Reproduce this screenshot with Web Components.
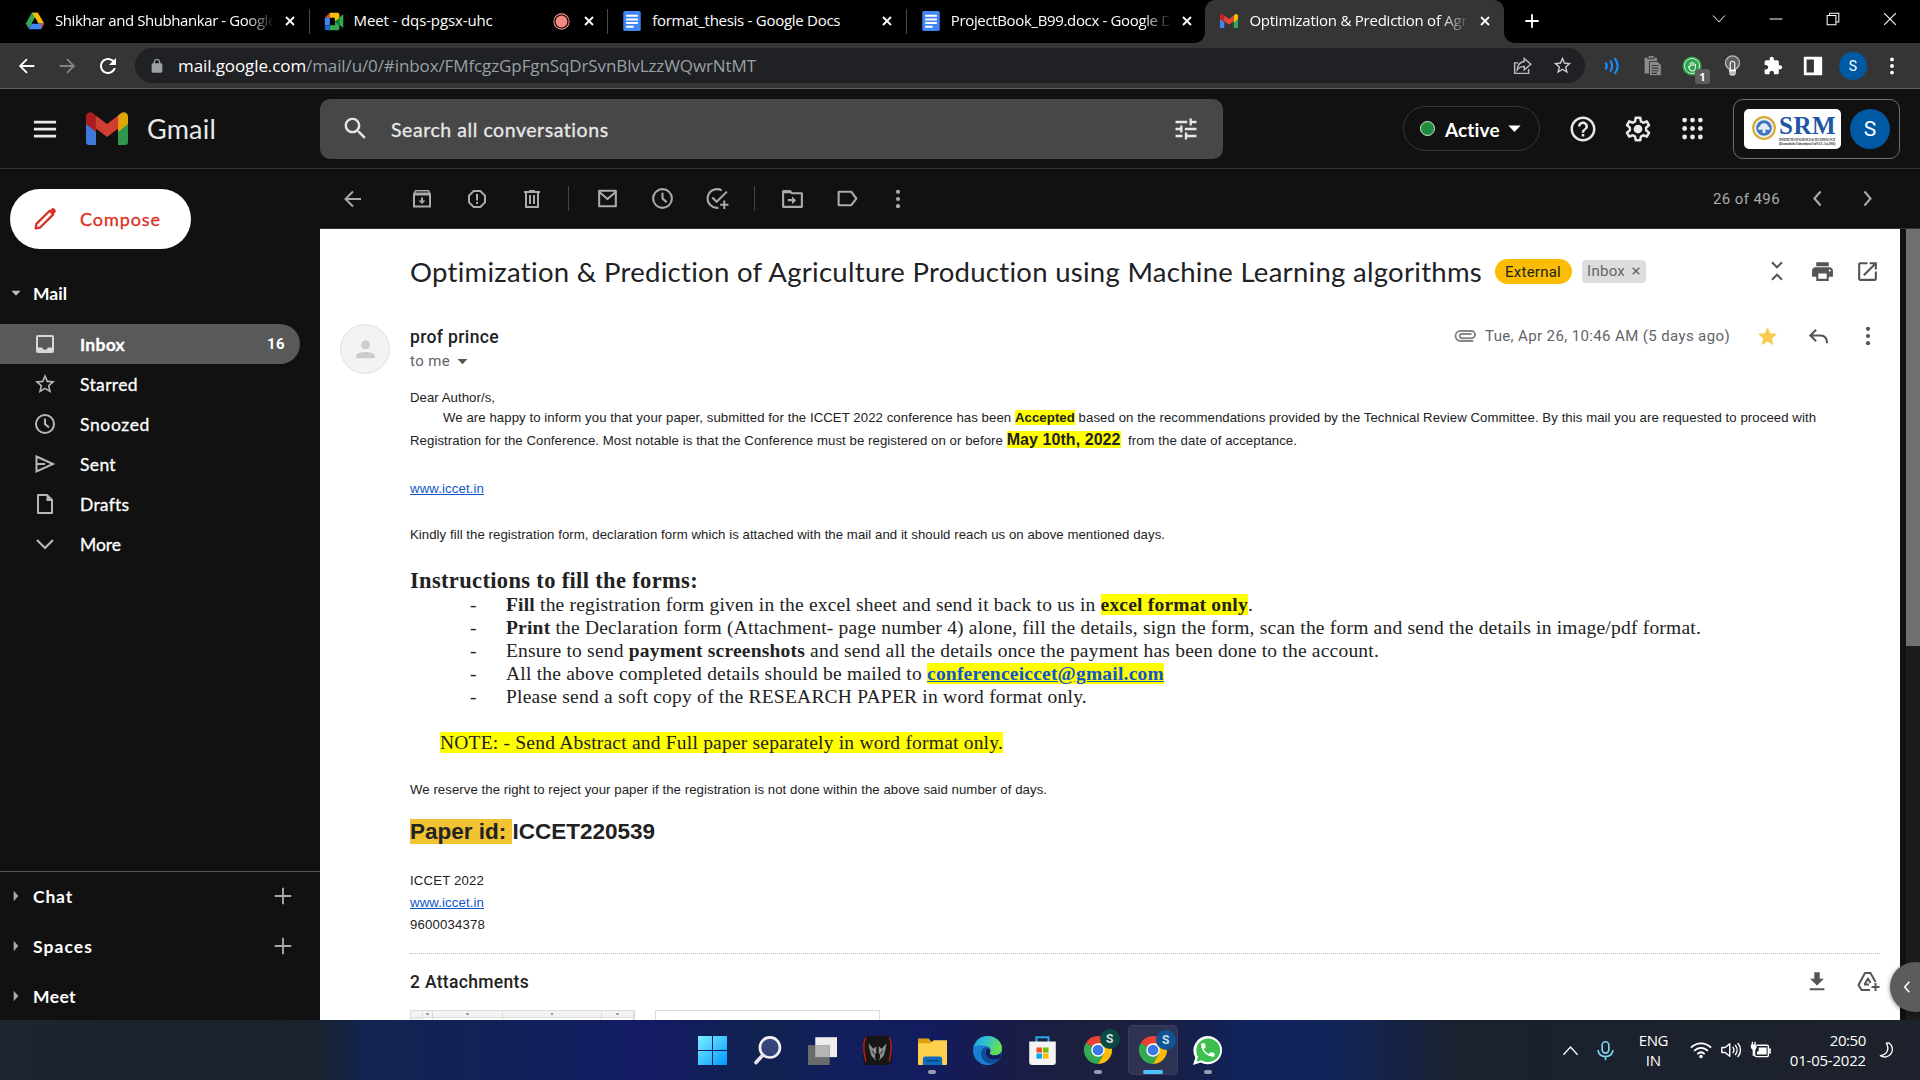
<!DOCTYPE html>
<html lang="en">
<head>
<meta charset="utf-8">
<title>Gmail</title>
<style>
html,body{margin:0;height:100%;overflow:hidden;background:#111}
desk-screen{width:1920px;height:1080px}
</style>
</head>
<body>
<desk-screen></desk-screen>
<script>
const ICONS={
back:'<path fill="none" stroke="currentColor" stroke-width="2" d="M20 12H5M12 4.500L4.500 12l7.500 7.500"/>',
forward:'<path fill="none" stroke="currentColor" stroke-width="2" d="M4 12h15M12 4.500l7.500 7.500-7.500 7.500"/>',
reload:'<path d="M17.650 6.350C16.200 4.900 14.210 4 12 4c-4.420 0-7.990 3.580-7.990 8s3.570 8 7.990 8c3.730 0 6.840-2.550 7.730-6h-2.080c-.82 2.330-3.040 4-5.650 4-3.310 0-6-2.690-6-6s2.690-6 6-6c1.660 0 3.140.69 4.220 1.780L13 11h7V4l-2.350 2.350z"/>',
lock:'<path d="M18 8h-1V6c0-2.760-2.240-5-5-5S7 3.240 7 6v2H6c-1.100 0-2 .9-2 2v10c0 1.100.9 2 2 2h12c1.100 0 2-.9 2-2V10c0-1.100-.9-2-2-2zM9 6c0-1.660 1.340-3 3-3s3 1.340 3 3v2H9V6z"/>',
close:'<path fill="none" stroke="currentColor" stroke-width="3.600" d="M4 4l16 16M20 4L4 20"/>',
plus:'<path fill="none" stroke="currentColor" stroke-width="2.800" d="M12 2v20M2 12h20"/>',
thinplus:'<path fill="none" stroke="currentColor" stroke-width="2" d="M12 3v18M3 12h18"/>',
wdown:'<path fill="none" stroke="currentColor" stroke-width="1.700" d="M2 6l10 11L22 6"/>',
wup:'<path fill="none" stroke="currentColor" stroke-width="1.800" d="M2 18l10-11 10 11"/>',
wmin:'<path fill="none" stroke="currentColor" stroke-width="1.700" d="M1 12h22"/>',
wmax:'<path fill="none" stroke="currentColor" stroke-width="1.800" d="M2 6h15v16H2zM6 6V2h16v15h-5"/>',
wclose:'<path fill="none" stroke="currentColor" stroke-width="1.900" d="M2 2l20 20M22 2L2 22"/>',
share:'<path fill="none" stroke="currentColor" stroke-width="1.700" d="M7 9H3v12h16v-5M14 4l7.500 6.500L14 17v-4c-4 0-6 1.200-8 4 .5-5.500 3-9 8-9.500z"/>',
star:'<path d="M22 9.240l-7.190-.62L12 2 9.190 8.630 2 9.240l5.460 4.730L5.820 21 12 17.270 18.180 21l-1.630-7.030L22 9.240zM12 15.400l-3.760 2.270 1-4.280-3.320-2.880 4.380-.38L12 6.100l1.710 4.040 4.380.38-3.320 2.880 1 4.280L12 15.400z"/>',
starfill:'<path d="M12 17.270L18.180 21l-1.640-7.030L22 9.240l-7.190-.61L12 2 9.190 8.630 2 9.240l5.460 4.730L5.820 21z"/>',
waves:'<g fill="none" stroke="#1a8cff" stroke-width="2.900"><path d="M3.500 7.500c2 3 2 6 0 9"/><path d="M9.500 4.500c3.500 5 3.500 10 0 15"/><path d="M15.500 1.500c5.500 7 5.500 14 0 21"/></g>',
clip:'<path fill="#8d8d8d" d="M3 3h4l1-2h5l1 2h3v5H8v13H3z"/><path fill="#4a4a4a" d="M6 3h8v2H6z"/><path fill="#8d8d8d" stroke="#353535" d="M8.500 7.500H18l4 4V23.500H8.500z"/><path stroke="#353535" stroke-width="1.300" d="M11 12h8M11 15h8M11 18h8M11 21h6"/>',
green:'<circle cx="12" cy="12" r="11.500" fill="#2ea24a"/><circle cx="12" cy="12" r="9" fill="none" stroke="#c6f0cc" stroke-width="1.200"/><path fill="none" stroke="#e8f7ea" stroke-width="1.300" stroke-linejoin="round" d="M7.500 12.500l2 4c1 2 5 2 6 0 .7-1.500.7-4 .7-7M9.800 13V8M12 12V6.500M14.200 12V7.500M7.500 12.500l2.300.5"/>',
bulb:'<circle cx="12" cy="9" r="8" fill="#5f5f5f" stroke="#bbb" stroke-width="1.500"/><path fill="none" stroke="#e8e8e8" stroke-width="1.500" d="M9.500 17V9.500c0-3 5-3 5 0V17"/><path fill="#fff" d="M8 17h8v4.500l-2 2h-4l-2-2z"/><path stroke="#777" d="M8 19.500h8M8 21.500h8"/>',
puzzle:'<path d="M20.500 11H19V7c0-1.100-.9-2-2-2h-4V3.500C13 2.120 11.880 1 10.500 1S8 2.120 8 3.500V5H4c-1.100 0-1.990.9-1.990 2v3.800H3.500c1.490 0 2.700 1.210 2.700 2.700s-1.210 2.700-2.700 2.700H2V20c0 1.100.9 2 2 2h3.800v-1.500c0-1.490 1.210-2.700 2.700-2.700 1.490 0 2.700 1.210 2.700 2.700V22H17c1.100 0 2-.9 2-2v-4h1.500c1.380 0 2.500-1.120 2.500-2.500S21.880 11 20.500 11z"/>',
panel:'<path fill-rule="evenodd" d="M2 2h20v20H2zM5 5v14h8V5z"/>',
more:'<circle cx="12" cy="4.800" r="2.100"/><circle cx="12" cy="12" r="2.100"/><circle cx="12" cy="19.200" r="2.100"/>',
menu:'<path d="M2.500 5h19v2.200h-19zM2.500 11h19v2.200h-19zM2.500 17h19v2.200h-19z"/>',
search:'<path d="M15.500 14h-.79l-.28-.27C15.410 12.590 16 11.110 16 9.500 16 5.910 13.090 3 9.500 3S3 5.910 3 9.500 5.910 16 9.500 16c1.610 0 3.090-.59 4.230-1.570l.27.28v.79l5 4.990L20.490 19l-4.990-5zm-6 0C7.010 14 5 11.990 5 9.500S7.010 5 9.500 5 14 7.010 14 9.500 11.990 14 9.500 14z"/>',
tune:'<path d="M3 17v2h6v-2H3zM3 5v2h10V5H3zm10 16v-2h8v-2h-8v-2h-2v6h2zM7 9v2H3v2h4v2h2V9H7zm14 4v-2H11v2h10zm-6-4h2V7h4V5h-4V3h-2v6z"/>',
help:'<path d="M11 18h2v-2h-2v2zm1-16C6.480 2 2 6.480 2 12s4.480 10 10 10 10-4.480 10-10S17.520 2 12 2zm0 18c-4.410 0-8-3.590-8-8s3.590-8 8-8 8 3.590 8 8-3.590 8-8 8zm0-14c-2.210 0-4 1.790-4 4h2c0-1.100.9-2 2-2s2 .9 2 2c0 2-3 1.750-3 5h2c0-2.250 3-2.500 3-5 0-2.210-1.790-4-4-4z"/>',
gear:'<path fill="none" stroke="currentColor" stroke-width="2" stroke-linejoin="round" d="M10.200 3h3.600l.5 2.900 1.900 1.100 2.800-1.100 1.800 3.100-2.300 1.900v2.200l2.300 1.900-1.800 3.100-2.800-1.100-1.900 1.100-.5 2.900h-3.600l-.5-2.900L7.800 17 5 18.100 3.200 15l2.300-1.900v-2.200L3.200 9 5 5.900 7.800 7l1.900-1.100z"/><circle cx="12" cy="12" r="3.500"/>',
apps:'<g><circle cx="5.500" cy="5" r="2"/><circle cx="12" cy="5" r="2"/><circle cx="18.500" cy="5" r="2"/><circle cx="5.500" cy="12" r="2"/><circle cx="12" cy="12" r="2"/><circle cx="18.500" cy="12" r="2"/><circle cx="5.500" cy="19" r="2"/><circle cx="12" cy="19" r="2"/><circle cx="18.500" cy="19" r="2"/></g>',
archive:'<path fill="none" stroke="currentColor" stroke-width="2" d="M4 7v12.500h16V7"/><path d="M3 7l2-4h14l2 4v1.500H3zM11 10.500h2v3h2.500L12 17l-3.500-3.500H11z"/><path stroke="#111" d="M5.500 5h13"/>',
spam:'<path fill-rule="evenodd" d="M15.730 3H8.270L3 8.270v7.460L8.270 21h7.460L21 15.730V8.270L15.730 3zM19 14.900L14.900 19H9.100L5 14.900V9.100L9.100 5h5.800L19 9.100v5.800zM11 7h2v6.500h-2zM11 15h2v2h-2z"/>',
trash:'<path fill="none" stroke="currentColor" stroke-width="2" d="M4 5h16M6 5v15h12V5M10 8v9M14 8v9"/><path d="M9 3h6v2H9z"/>',
mail:'<path fill="none" stroke="currentColor" stroke-width="2" stroke-linejoin="round" d="M4 4.500h16v15H4zM4.500 6L12 12.500 19.500 6"/>',
clock:'<circle cx="12" cy="12" r="9" fill="none" stroke="currentColor" stroke-width="2"/><path fill="none" stroke="currentColor" stroke-width="2" d="M12 6.500V12l4 3.500"/>',
task:'<path fill="none" stroke="currentColor" stroke-width="2" d="M16 4.200A9 9 0 1 0 13 20.900M7 11l4.200 4.200L21 5.400M18.500 14v8M14.500 18h8"/>',
move:'<path fill="none" stroke="currentColor" stroke-width="2" stroke-linejoin="round" d="M3 5h6.500l2 2H21v13H3z"/><path d="M3 4h7l2 3H3zM7.500 12.500h4V10l4 3.700-4 3.700v-2.700h-4z"/>',
label:'<path fill="none" stroke="currentColor" stroke-width="2" stroke-linejoin="round" d="M3.500 5.500h12L20.500 12l-5 6.500h-12z"/>',
left:'<path fill="none" stroke="currentColor" stroke-width="2.400" d="M15.500 4l-7 8 7 8"/>',
right:'<path fill="none" stroke="currentColor" stroke-width="2.400" d="M8.500 4l7 8-7 8"/>',
pencil:'<path fill="none" stroke="currentColor" stroke-width="2.200" stroke-linejoin="round" d="M2.500 21.500l.8-4.300L16 4.500l3.500 3.500L6.800 20.700z"/><path d="M15.800 4.700l2.400-2.400c1.300-1.300 4.800 2.200 3.500 3.500l-2.400 2.400z"/>',
inbox:'<path fill-rule="evenodd" d="M5 3h14a2 2 0 0 1 2 2v14a2 2 0 0 1-2 2H5a2 2 0 0 1-2-2V5a2 2 0 0 1 2-2zM5 5v10.500h4.200c.4 1.500 1.500 2.200 2.800 2.200s2.400-.7 2.800-2.200H19V5z"/>',
send:'<path fill="none" stroke="currentColor" stroke-width="2" d="M3.500 4.500L20 12 3.500 19.500zM3.500 12H12"/>',
draft:'<path fill="none" stroke="currentColor" stroke-width="2" stroke-linejoin="round" d="M5 3h9l5 5v13H5z"/><path d="M13.500 3.500V9H19z"/>',
chev:'<path fill="none" stroke="currentColor" stroke-width="2.200" d="M4 8l8 8 8-8"/>',
tri:'<path d="M5 8.500h14L12 16z"/>',
trir:'<path d="M8.500 4l7 8-7 8z"/>',
collapse:'<path fill="none" stroke="currentColor" stroke-width="2.200" d="M6.500 2.500L12 8l5.500-5.500M6.500 21.500L12 16l5.500 5.500"/>',
print:'<path d="M19 8H5c-1.660 0-3 1.340-3 3v6h4v4h12v-4h4v-6c0-1.660-1.340-3-3-3zm-3 11H8v-5h8v5zm3-7c-.55 0-1-.45-1-1s.45-1 1-1 1 .45 1 1-.45 1-1 1zm-1-9H6v4h12V3z"/>',
open:'<path d="M19 19H5V5h7V3H5c-1.110 0-2 .9-2 2v14c0 1.100.89 2 2 2h14c1.100 0 2-.9 2-2v-7h-2v7zM14 3v2h3.590l-9.830 9.830 1.410 1.410L19 6.410V10h2V3h-7z"/>',
attach:'<path fill="none" stroke="currentColor" stroke-width="1.900" stroke-linecap="round" d="M19.500 17H7.500a5 5 0 0 1 0-10H18.500a3.600 3.600 0 0 1 0 7.200H8.800a2.100 2.100 0 0 1 0-4.200h9"/>',
reply:'<path fill="none" stroke="currentColor" stroke-width="2.200" d="M9.500 5L3.500 11l6 6M4 11h10c4.500 0 7 2.500 7 8"/>',
download:'<path d="M9 2.500h6v7h4.500L12 17 4.500 9.500H9zM4 20h16v2H4z"/>',
driveadd:'<g fill="none" stroke="currentColor" stroke-width="2" stroke-linejoin="round"><path d="M14 21H5.500L2.500 16 9 4h5.500l5 9"/><path d="M8.500 15.500L12 9.500l2.500 4.500M8 15.500h5M19.500 14v8M15.500 18h8"/></g>',
person:'<circle cx="12" cy="7.500" r="4.300"/><path d="M3 20.500v-2.300c0-5 18-5 18 0v2.300z"/>',
gmail:'<svg viewBox="0 0 42 33" width="42" height="33"><path fill="#3e79da" d="M0 9l10 8v16H3a3 3 0 0 1-3-3z"/><path fill="#2f964b" d="M42 9l-10 8v16h7a3 3 0 0 0 3-3z"/><path fill="#a91f1f" d="M0 12V4.500C0 .8 4-1.200 7 1.200l3 2.300V20z"/><path fill="#e2a60a" d="M42 12V4.500c0-3.700-4-5.700-7-3.300l-3 2.300V20z"/><path fill="#d03d31" d="M9.800 3.500L21 12 32.200 3.500V16.500L21 25 9.800 16.500z"/></svg>',
gm:'<svg viewBox="0 0 42 33" width="22" height="17" x="1" y="3.500"><path fill="#4285f4" d="M0 9l10 8v16H3a3 3 0 0 1-3-3z"/><path fill="#34a853" d="M42 9l-10 8v16h7a3 3 0 0 0 3-3z"/><path fill="#c5221f" d="M0 12V4.500C0 .8 4-1.200 7 1.200l3 2.300V20z"/><path fill="#fbbc04" d="M42 12V4.500c0-3.700-4-5.700-7-3.300l-3 2.300V20z"/><path fill="#ea4335" d="M9.800 3.500L21 12 32.200 3.500V16.500L21 25 9.800 16.500z"/></svg>',
drive:'<path fill="#34a853" d="M8.200 2h7L8.500 14.500 4.500 21 1 15z"/><path fill="#fbbc04" d="M8.500 2h7L23 15h-7z"/><path fill="#4285f4" d="M8 15h15l-3.800 7H4.500z"/><path fill="#000" d="M12 8l4 7H8z"/><path fill="#ea4335" d="M19 15h4l-3.500 6z"/>',
meet:'<path fill="#ea4335" d="M7 2v6H1z"/><path fill="#4285f4" d="M1 8h6v9H1z"/><path fill="#1967d2" d="M1 17h6v6H3a2 2 0 0 1-2-2z"/><path fill="#fbbc04" d="M7 2h9.500a2 2 0 0 1 2 2v7.500L13 12V8H7z"/><path fill="#34a853" d="M7 17h6v-5l5.500 5v4a2 2 0 0 1-2 2H7z"/><path fill="#00832d" d="M13.500 12.500L23 4v16z"/><path fill="#34a853" d="M18.500 8L23 4v16l-4.500-3.500z"/>',
docs:'<rect x="1.500" y="0" width="21" height="24" rx="2" fill="#4285f4"/><path fill="#fff" d="M5 4.500h14v2.400H5zM5 8.900h14v2.400H5zM5 13.300h14v2.400H5zM5 17.600h9V20H5z"/>',
rec:'<circle cx="12" cy="12" r="10.800" fill="none" stroke="#f28b82" stroke-width="1.500"/><circle cx="12" cy="12" r="8.300" fill="#f28b82"/>',
emblem:'<circle cx="12" cy="12" r="10.800" fill="#eef3fb" stroke="#d6ae37" stroke-width="2.200"/><circle cx="12" cy="12" r="7.800" fill="#3f74bf"/><path fill="#e3edf9" d="M6 13.500c0-3 2-2.500 2.500-4.500C10 6.500 14 6.500 15.500 9c.5 2 2.500 1.500 2.500 4.500-2 1-3.500-.5-4.500 0v3.500h-3v-3.500c-1-.5-2.500 1-4.500 0z"/>',
win:'<defs><linearGradient id="w" gradientUnits="userSpaceOnUse" x1="0" y1="0" x2="24" y2="24"><stop stop-color="#7df0ff"/><stop offset="1" stop-color="#0098ff"/></linearGradient></defs><path fill="url(#w)" d="M0 0h11.600v11.600H0zM12.400 0H24v11.600H12.400zM0 12.400h11.600V24H0zM12.400 12.400H24V24H12.400z"/>',
tsearch:'<circle cx="14" cy="9.500" r="8.300" fill="#35457a" stroke="#f2f2f4" stroke-width="2.200"/><path stroke="#e4e4ea" stroke-width="3" stroke-linecap="round" d="M8 16L2.500 22"/>',
tview:'<rect x="6" y="1" width="18" height="16.500" fill="#ededed"/><rect x="0" y="7.500" width="18" height="16.500" fill="#6b6b6b"/><path fill="#b5b5b5" d="M6 7.500h12v10H6z"/>',
pred:'<path fill="#161616" d="M3 0h18l3 4v15l-2 5H2l-2-5V4z"/><path stroke="#d81e1e" stroke-width="1" fill="none" d="M2.500 1L.8 5v8l1.500 8M21.500 1l1.700 4v8l-1.500 8"/><path fill="#8d8d8d" d="M4.500 6l4 4.500L11 8.500v5.500l-1 1v3l1 2.500-4-4-1.500-5zM19.500 6l-4 4.500L13 8.500v5.500l1 1v3l-1 2.500 4-4 1.500-5z"/><path stroke="#222" stroke-width=".8" d="M7.500 12l2 3M16.500 12l-2 3"/>',
folder:'<path fill="#e0a012" d="M0 2h9l3 4v10H0z"/><path fill="#ffd04d" d="M0 6h10l3-2.500h11V23a1 1 0 0 1-1 1H1a1 1 0 0 1-1-1z"/><path fill="#0f6cbd" d="M4 24v-5a2 2 0 0 1 2-2h12a2 2 0 0 1 2 2v5z"/><path stroke="#0a3d70" stroke-width="1" d="M7 20.500h10"/>',
edge:'<defs><linearGradient id="e" x1="0" y1="0" x2="1" y2=".4"><stop stop-color="#1ca3e8"/><stop offset=".5" stop-color="#35c1c9"/><stop offset="1" stop-color="#66e04e"/></linearGradient></defs><circle cx="12" cy="12" r="12" fill="#1b7fd6"/><path fill="url(#e)" d="M.2 10C2 3 7 0 12 0c7 0 12 5 12 10 0 3.500-2.500 6-6 6-3 0-4.500-1.300-4-2.200 1.500-1.800.8-5.800-4-5.800C6 7.500 1.500 7 .2 10z"/><path fill="#0c4f97" d="M9.500 9.500c-4 1.500-4.500 12 5 13.500 3 .2 6.500-2 8-4.500-3 1.500-11 1.500-12-4.500-.2-1.500 0-3 1.500-4.500-.5-.3-1.500-.4-2.500 0z"/><path fill="#141d5c" d="M14 13.800c-.5.900 1 2.200 4 2.200 2.500 0 4.500-1 5.600-2.800-.2 2-.6 3.600-1.400 5.300-3 1.500-11 1.500-11.700-4.500 0-1.500.5-3 1.500-4 2 .5 2.900 2.700 2 3.800z"/>',
store:'<path fill="none" stroke="#29a8e8" stroke-width="1.700" d="M7 5V1h10v4"/><path fill="#f4f4f4" d="M1 4.500h22V22a2 2 0 0 1-2 2H3a2 2 0 0 1-2-2z"/><path fill="#f25022" d="M7 9.500h4.600v4.200H7z"/><path fill="#7fba00" d="M12.400 9.500H17v4.200h-4.600z"/><path fill="#00a4ef" d="M7 14.500h4.600v4.200H7z"/><path fill="#ffb900" d="M12.400 14.500H17v4.200h-4.600z"/>',
chrome:'<path fill="#ea4335" d="M12 12L1.600 6A12 12 0 0 1 22.400 6H12z"/><path fill="#34a853" d="M12 12L1.600 6A12 12 0 0 0 12 24l5.200-9z"/><path fill="#fbbc04" d="M12 6h10.400A12 12 0 0 1 12 24l5.200-9z"/><circle cx="12" cy="12" r="5.800" fill="#fff"/><circle cx="12" cy="12" r="4.600" fill="#3b78e7"/>',
wa:'<path fill="#fff" d="M12 0a12 11.700 0 1 1-5.600 22L0 24l1.900-6A12 12 0 0 1 12 0z"/><path fill="#3dbf50" d="M12 2a10 9.800 0 1 1-5 18l-4 1.100 1.200-3.800A10 10 0 0 1 12 2z"/><g transform="translate(4.800 4.200) scale(.62)"><path fill="#fff" d="M6.620 10.790c1.440 2.830 3.760 5.140 6.590 6.590l2.200-2.200c.27-.27.67-.36 1.020-.24 1.120.37 2.330.57 3.570.57.55 0 1 .45 1 1V20c0 .55-.45 1-1 1-9.390 0-17-7.610-17-17 0-.55.45-1 1-1h3.500c.55 0 1 .45 1 1 0 1.250.2 2.450.57 3.570.11.35.03.74-.25 1.020l-2.200 2.200z"/></g>',
mic:'<g fill="none" stroke="#79d3ea" stroke-width="1.900"><rect x="8.200" y="2" width="7.600" height="13" rx="3.800"/><path d="M3.500 11.500c0 10 17 10 17 0M12 19v4"/></g>',
wifi:'<g fill="none" stroke="#fff" stroke-width="1.900"><path d="M1 9.500c6.500-6.300 15.500-6.300 22 0M4.500 13c4.500-4.500 10.500-4.500 15 0M8 16.500c2.500-2.500 5.500-2.500 8 0"/></g><circle cx="12" cy="19" r="1.900" fill="#fff"/>',
vol:'<g fill="none" stroke="#fff" stroke-width="1.700" stroke-linejoin="round"><path d="M1 9v6h4l5.500 4.500v-15L5 9zM14 8.500c1.800 2 1.800 5 0 7M17 6c3 3.500 3 8.500 0 12M20 3.500c4.500 5 4.500 12 0 17"/></g>',
batt:'<g fill="none" stroke="#fff" stroke-width="1.700"><path d="M8 6h11.500a1.500 1.500 0 0 1 1.500 1.500v10a1.500 1.500 0 0 1-1.500 1.500h-12a2 2 0 0 1-2-2M21.500 10.500h1.500v4h-1.500"/></g><path fill="#fff" d="M10 8.500h9v8H8v-3l2-1zM1 5h1V2h1.500v3H5V2h1.500v3h1v4L6 11v7H3v-7L1 9z"/>',
moon:'<path fill="none" stroke="#fff" stroke-width="1.700" stroke-linejoin="round" d="M14 2.500A9.700 9.700 0 1 1 3 18.500C11 17.500 15 11 10.500 2.700 11.500 2.400 13 2.300 14 2.500z"/>'
};
const fits=[];
const define=(tag,html,setup)=>{
  const t=document.createElement('template');t.innerHTML=html;
  customElements.define(tag,class extends HTMLElement{
    connectedCallback(){
      if(this.shadowRoot)return;
      const r=this.attachShadow({mode:'open'});
      r.append(t.content.cloneNode(true));
      if(setup)setup(this,r);
    }
  });
};
/* An icon from the table above: name, size (px) */
define('ui-icon','<style>:host{display:block;flex:none;line-height:0}svg{display:block;overflow:visible}</style>',(el,r)=>{
  const n=el.getAttribute('name'),s=el.getAttribute('size')||24,w=el.getAttribute('wide')||s;
  const d=document.createElement('div');
  d.innerHTML=n==='gmail'?ICONS[n]:`<svg width="${w}" height="${s}" viewBox="0 0 24 24" fill="currentColor" preserveAspectRatio="none">${ICONS[n]}</svg>`;
  r.append(d);
});
/* One line of text tracked out or in to a measured width */
define('fit-text','<style>:host{display:inline-block;flex:none;white-space:nowrap}</style><slot></slot>',el=>fits.push(el));
define('browser-tab',`<style>
:host{display:flex;align-items:center;flex:none;box-sizing:border-box;width:298.6px;height:43px;padding:0 0 1px 14px;color:#fff;position:relative;font:15px "Open Sans",sans-serif}
:host([active]){background:#353535;border-radius:10px 10px 0 0}
:host([active])::before,:host([active])::after{content:"";position:absolute;bottom:0;width:10px;height:10px}
:host([active])::before{left:-10px;background:radial-gradient(circle at 0 0,transparent 9.500px,#353535 10px)}
:host([active])::after{right:-10px;background:radial-gradient(circle at 100% 0,transparent 9.500px,#353535 10px)}
.t{width:218px;margin-left:10px;overflow:hidden;white-space:nowrap;height:26px;line-height:24px}
:host([fade]) .t{-webkit-mask-image:linear-gradient(90deg,#000 88%,rgba(0,0,0,.1))}
:host([rec]) .t{width:199px}
.rec{display:none;margin-left:0}:host([rec]) .rec{display:block}
.c{margin-left:12px}:host([rec]) .c{margin-left:13px}
.s{margin-left:13px;width:1px;height:25px;background:#4a4a4a}
:host([rec]) .s{margin-left:12px}
:host([nosep]) .s{display:none}
</style><ui-icon class="i" size="20"></ui-icon><div class="t"><slot></slot></div><ui-icon class="rec" name="rec" size="17"></ui-icon><ui-icon class="c" name="close" size="12"></ui-icon><span class="s"></span>`,(el,r)=>{
  const i=document.createElement('ui-icon');i.setAttribute('name',el.getAttribute('icon'));i.setAttribute('size','20');
  r.querySelector('.i').replaceWith(i);
});
define('browser-chrome',`<style>
:host{display:block;flex:none;height:89px;background:#000;color:#fff;font-family:"Open Sans",sans-serif}
.tabs{display:flex;height:43px;padding-left:11px;align-items:center}
.bar{display:flex;align-items:center;height:45px;background:#353535;border-bottom:1px solid #5e5e5e}
.omni{display:flex;align-items:center;width:1450px;height:35px;border-radius:18px;background:#202124;margin-left:15px;font-size:17px;color:#9aa0a6}
.omni b{font-weight:400;color:#fff}
.omni fit-text{margin-left:13px}
.g{position:relative;margin-left:19px}
.badge{position:absolute;left:13px;top:13px;width:15px;height:15px;border-radius:3px;background:#5d5d5d;font:bold 11px/15px "Open Sans",sans-serif;text-align:center}
.av{width:28px;height:28px;border-radius:50%;background:#0059a3;font:14px/28px Roboto,sans-serif;text-align:center;margin-left:15px}
</style>
<div class="tabs">
<browser-tab icon="drive" fade><fit-text w="221">Shikhar and Shubhankar - Google</fit-text></browser-tab>
<browser-tab icon="meet" rec><fit-text w="139">Meet - dqs-pgsx-uhc</fit-text></browser-tab>
<browser-tab icon="docs"><fit-text w="188">format_thesis - Google Docs</fit-text></browser-tab>
<browser-tab icon="docs" fade nosep><fit-text w="221">ProjectBook_B99.docx - Google D</fit-text></browser-tab>
<browser-tab icon="gm" fade nosep active><fit-text w="218">Optimization &amp; Prediction of Agr</fit-text></browser-tab>
<ui-icon name="plus" size="16" style="margin:-1px 0 0 20px"></ui-icon>
<ui-icon name="wdown" size="14" style="margin:-6px 0 0 172px"></ui-icon>
<ui-icon name="wmin" size="14" style="margin:-6px 0 0 43px"></ui-icon>
<ui-icon name="wmax" size="14" style="margin:-6px 0 0 43px"></ui-icon>
<ui-icon name="wclose" size="14" style="margin:-6px 0 0 43px"></ui-icon>
</div>
<div class="bar">
<ui-icon name="back" size="22" style="margin-left:16px"></ui-icon>
<ui-icon name="forward" size="22" style="margin-left:18px;color:#848484"></ui-icon>
<ui-icon name="reload" size="24" style="margin-left:18px"></ui-icon>
<div class="omni"><ui-icon name="lock" size="16" style="margin-left:14px;color:#9aa0a6"></ui-icon><fit-text w="578"><b>mail.google.com</b>/mail/u/0/#inbox/FMfcgzGpFgnSqDrSvnBlvLzzWQwrNtMT</fit-text>
<ui-icon name="share" size="21" style="margin-left:756px;color:#bbb"></ui-icon><ui-icon name="star" size="21" style="margin-left:19px;color:#ccc"></ui-icon></div>
<ui-icon name="waves" size="18" style="margin-left:18px"></ui-icon>
<ui-icon name="clip" size="21" style="margin-left:21px"></ui-icon>
<div class="g"><ui-icon name="green" size="20"></ui-icon><span class="badge">1</span></div>
<ui-icon name="bulb" size="21" style="margin-left:20px"></ui-icon>
<ui-icon name="puzzle" size="20" style="margin-left:20px"></ui-icon>
<ui-icon name="panel" size="22" style="margin-left:19px"></ui-icon>
<div class="av">S</div>
<ui-icon name="more" size="22" style="margin-left:14px"></ui-icon>
</div>`);
define('gmail-header',`<style>
:host{display:flex;flex:none;align-items:center;height:79px;border-bottom:1px solid #333;color:#e8e8e8;background:#111}
.brand{font:27px Lato,sans-serif;margin-left:19px}
.search{display:flex;align-items:center;width:903px;height:60px;margin-left:105px;border-radius:10px;background:#474747;font:19.500px Lato,sans-serif;-webkit-text-stroke:.3px #e8e8e8}
.pill{display:flex;align-items:center;box-sizing:border-box;width:137px;height:45px;border:1px solid #363636;border-radius:23px;margin-left:180px;font:bold 19px Lato,sans-serif;color:#fff}
.dot{box-sizing:border-box;width:15px;height:15px;border-radius:50%;background:#1e8e3e;border:1px solid #d5e9d9;margin:0 10px 0 16px}
.acct{display:flex;align-items:center;box-sizing:border-box;width:167px;height:60px;border:1px solid #6a6d71;border-radius:10px;margin-left:26px}
.logo{display:flex;width:97px;height:40px;background:#fff;border-radius:5px;margin-left:10px;align-items:flex-start}
.txt{display:flex;flex-direction:column;align-items:flex-start;color:#1f55a5;margin:4px 0 0 3px;font:bold 25px/25px "Liberation Serif",serif}
.txt .a{font:bold 3.500px/4px "Liberation Serif",serif;color:#444;margin-top:0}
.av{width:40px;height:40px;border-radius:50%;background:#0059a3;margin-left:9px;text-align:center;font:21px/41px Roboto,sans-serif;color:#fff}
</style>
<ui-icon name="menu" size="28" style="margin-left:31px"></ui-icon>
<ui-icon name="gmail" style="margin-left:27px"></ui-icon>
<fit-text class="brand" w="69">Gmail</fit-text>
<div class="search" style="margin-left:104px"><ui-icon name="search" size="29" style="margin-left:21px"></ui-icon><fit-text w="218" style="margin-left:21px;padding-top:2px">Search all conversations</fit-text><ui-icon name="tune" size="28" style="margin-left:563px"></ui-icon></div>
<div class="pill"><span class="dot"></span><fit-text w="55" style="padding-top:1px">Active</fit-text><ui-icon name="tri" size="21" style="margin-left:4px"></ui-icon></div>
<ui-icon name="help" size="30" style="margin-left:28px"></ui-icon>
<ui-icon name="gear" size="30" style="margin-left:25px"></ui-icon>
<ui-icon name="apps" size="29" style="margin-left:25px"></ui-icon>
<div class="acct"><div class="logo"><ui-icon name="emblem" size="24" style="margin:7px 0 0 8px"></ui-icon><div class="txt"><fit-text w="57">SRM</fit-text><fit-text class="a" w="56">INSTITUTE OF SCIENCE &amp; TECHNOLOGY</fit-text><fit-text class="a" w="56">(Deemed to be University u/s 3 of UGC Act, 1956)</fit-text></div></div><div class="av">S</div></div>`);
define('nav-row',`<style>
:host{display:flex;align-items:center;height:40px;width:300px;box-sizing:border-box;padding-left:33px;color:#fff;font:17.500px Lato,sans-serif;-webkit-text-stroke:.3px #fff}
:host([selected]){background:#595959;border-radius:0 20px 20px 0;font-weight:bold}
span{width:47px;color:#b8b8b8}:host([selected]) span{color:#d8d8d8}
em{margin-left:auto;padding-right:15px;font:bold 15px Roboto,sans-serif;-webkit-text-stroke:0}
</style><span></span><slot></slot><em><slot name="count"></slot></em>`,(el,r)=>{
  const i=document.createElement('ui-icon');i.setAttribute('name',el.getAttribute('icon'));i.setAttribute('size','24');
  r.querySelector('span').append(i);
});
define('nav-section',`<style>
:host{display:flex;align-items:center;box-sizing:border-box;height:50px;padding:0 0 2px 8px;color:#fff;font:bold 17.500px Lato,sans-serif}
ui-icon{color:#aaa}.t{width:17px;margin-right:8px}
.p{margin-left:auto;margin-right:26px}:host(:not([add])) .p{display:none}
</style><div class="t"><slot name="mark"><ui-icon name="trir" size="16"></ui-icon></slot></div><slot></slot><ui-icon class="p" name="thinplus" size="22"></ui-icon>`);
define('side-bar',`<style>
:host{display:flex;flex-direction:column;width:320px;height:851px;background:#111}
.compose{display:flex;align-items:center;box-sizing:border-box;width:181px;height:60px;margin:20px 0 20px 10px;border-radius:30px;background:#fff;color:#d93025;padding:0 0 1px 23px;font:18px Lato,sans-serif;-webkit-text-stroke:.3px #d93025;flex:none}
.mail{margin-bottom:5px}
.low{margin-top:auto;border-top:1px solid #555;height:148px}
</style>
<div class="compose"><ui-icon name="pencil" size="25"></ui-icon><fit-text w="81" style="margin-left:22px">Compose</fit-text></div>
<nav-section class="mail"><ui-icon slot="mark" name="tri" size="16" style="color:#bbb"></ui-icon><fit-text w="34">Mail</fit-text></nav-section>
<nav-row icon="inbox" selected><fit-text w="45">Inbox</fit-text><fit-text slot="count" w="18">16</fit-text></nav-row>
<nav-row icon="star"><fit-text w="58">Starred</fit-text></nav-row>
<nav-row icon="clock"><fit-text w="70">Snoozed</fit-text></nav-row>
<nav-row icon="send"><fit-text w="36">Sent</fit-text></nav-row>
<nav-row icon="draft"><fit-text w="49">Drafts</fit-text></nav-row>
<nav-row icon="chev"><fit-text w="41">More</fit-text></nav-row>
<div class="low"><nav-section add><fit-text w="40">Chat</fit-text></nav-section><nav-section add><fit-text w="60">Spaces</fit-text></nav-section><nav-section><fit-text w="43">Meet</fit-text></nav-section></div>`);
define('mail-toolbar',`<style>
:host{display:flex;align-items:center;height:59px;flex:none;border-bottom:1px solid #333;color:#aaa;font:15px Roboto,sans-serif;padding-left:21px}
i{width:1px;height:25px;background:#444;margin:0 25px 0 24px}
.n{margin-left:803px}
</style><ui-icon name="back" size="24"></ui-icon>
<ui-icon name="archive" size="24" style="margin-left:45px"></ui-icon><ui-icon name="spam" size="24" style="margin-left:31px"></ui-icon><ui-icon name="trash" size="24" style="margin-left:31px"></ui-icon><i></i>
<ui-icon name="mail" size="25" style="margin-left:1px"></ui-icon><ui-icon name="clock" size="25" style="margin-left:30px"></ui-icon><ui-icon name="task" size="25" style="margin-left:30px"></ui-icon><i></i>
<ui-icon name="move" size="25"></ui-icon><ui-icon name="label" size="25" style="margin-left:30px"></ui-icon><ui-icon name="more" size="24" style="margin-left:26px"></ui-icon>
<fit-text class="n" w="67">26 of 496</fit-text><ui-icon name="left" size="21" style="margin-left:27px"></ui-icon><ui-icon name="right" size="21" style="margin-left:29px"></ui-icon>`);
define('mail-line','<style>:host{display:block;height:20px;line-height:20px;margin-top:var(--gap,0px);white-space:nowrap}</style><slot></slot>');
define('mail-message',`<style>
:host{display:block;width:1580px;height:791px;overflow:hidden;background:#fff;color:#202124;box-sizing:border-box;padding-left:20px}
.head{display:flex;align-items:center;height:84px;padding-left:70px;color:#555}
h1{margin:0;font:27.500px Lato,sans-serif;color:#202124}
.ext{box-sizing:border-box;width:77px;height:25px;border-radius:13px;background:#fbbc04;color:#222;font:15px/26px Roboto,sans-serif;padding-left:10px;margin-left:13px}
.tag{display:flex;align-items:center;box-sizing:border-box;width:64px;height:23px;border-radius:4px;background:#ddd;color:#666;font:15px Roboto,sans-serif;padding-left:5px;margin-left:10px}
.from{display:flex;height:72px;font-family:Roboto,sans-serif;margin-top:2px}
.av{display:flex;align-items:center;justify-content:center;box-sizing:border-box;width:50px;height:50px;margin-top:9px;border:1px solid #e2e2e2;border-radius:50%;background:#f3f3f3;color:#ccc}
.who{margin:10px 0 0 20px;width:300px}
.who b{display:block;font-size:17.500px;line-height:24px;font-weight:500}
.who div{display:flex;align-items:center;color:#5f6368;font-size:15px;line-height:24px}
.meta{display:flex;align-items:center;height:42px;margin-left:743px;color:#5f6368;font-size:15px}
.body{padding:1px 0 0 70px;color:#222;font:13.200px "Liberation Sans",sans-serif}
.t{font:19.500px/20px "Liberation Serif",serif}
mark{background:#ff0;color:inherit}
a{color:#15c;text-decoration:underline}
.li{display:flex;padding-left:60px}.li::before{content:"-";width:36px}
.rule{width:1470px;height:0;border-top:1px dotted #bbb}
.att{display:flex;align-items:center;height:56px;font:500 17.500px Roboto,sans-serif;color:#222}
.att ui-icon{color:#555;margin-top:-2px}
.thumbs{display:flex;gap:20px}
.card{box-sizing:border-box;width:225px;height:40px;border:1px solid #ddd;background:#fff}
.sheet{display:grid;grid-template-columns:12px 10px 70px 99px 1fr;grid-template-rows:7px 20px;background:#f3f3f3}
.sheet span{border-right:1px solid #ddd;border-bottom:1px solid #ddd;background:radial-gradient(circle at 50% 50%,#999 1px,transparent 1.500px)}
.sheet span:first-child{background:none}.sheet span:nth-child(n+7){background:#fff}
</style>
<div class="head"><h1><fit-text w="1074">Optimization &amp; Prediction of Agriculture Production using Machine Learning algorithms</fit-text></h1>
<div class="ext"><fit-text w="56">External</fit-text></div><div class="tag"><fit-text w="38">Inbox</fit-text><ui-icon name="close" size="10" style="margin-left:6px"></ui-icon></div>
<ui-icon name="collapse" size="22" style="margin-left:120px"></ui-icon><ui-icon name="print" size="25" style="margin-left:22px"></ui-icon><ui-icon name="open" size="25" style="margin-left:20px"></ui-icon></div>
<div class="from"><div class="av"><ui-icon name="person" size="25"></ui-icon></div>
<div class="who"><b><fit-text w="89">prof prince</fit-text></b><div><fit-text w="40">to me</fit-text><ui-icon name="tri" size="17" style="margin-left:4px;color:#555"></ui-icon></div></div>
<div class="meta"><ui-icon name="attach" size="24" style="color:#888"></ui-icon><fit-text w="245" style="margin-left:8px">Tue, Apr 26, 10:46 AM (5 days ago)</fit-text><ui-icon name="starfill" size="23" style="margin-left:26px;color:#f7cb4d"></ui-icon><ui-icon name="reply" size="23" style="margin-left:28px;color:#555"></ui-icon><ui-icon name="more" size="24" style="margin-left:26px;color:#555"></ui-icon></div></div>
<div class="body">
<mail-line><fit-text w="85">Dear Author/s,</fit-text></mail-line>
<mail-line><fit-text w="1373" style="margin-left:33px">We are happy to inform you that your paper, submitted for the ICCET 2022 conference has been <mark><b>Accepted</b></mark> based on the recommendations provided by the Technical Review Committee. By this mail you are requested to proceed with</fit-text></mail-line>
<mail-line style="--gap:2px"><fit-text w="887">Registration for the Conference. Most notable is that the Conference must be registered on or before <mark style="font-size:16px"><b>May 10th, 2022</b></mark>&nbsp; from the date of acceptance.</fit-text></mail-line>
<mail-line style="--gap:29px"><fit-text w="74"><a>www.iccet.in</a></fit-text></mail-line>
<mail-line style="--gap:26px"><fit-text w="755">Kindly fill the registration form, declaration form which is attached with the mail and it should reach us on above mentioned days.</fit-text></mail-line>
<mail-line class="t" style="--gap:26px;font-size:22.500px"><fit-text w="288"><b>Instructions to fill the forms:</b></fit-text></mail-line>
<mail-line class="t" style="--gap:4px"><div class="li"><fit-text w="747"><b>Fill</b> the registration form given in the excel sheet and send it back to us in <mark><b>excel format only</b></mark>.</fit-text></div></mail-line>
<mail-line class="t" style="--gap:3px"><div class="li"><fit-text w="1195"><b>Print</b> the Declaration form (Attachment- page number 4) alone, fill the details, sign the form, scan the form and send the details in image/pdf format.</fit-text></div></mail-line>
<mail-line class="t" style="--gap:3px"><div class="li"><fit-text w="873">Ensure to send <b>payment screenshots</b> and send all the details once the payment has been done to the account.</fit-text></div></mail-line>
<mail-line class="t" style="--gap:3px"><div class="li"><fit-text w="658">All the above completed details should be mailed to <mark><b><a>conferenceiccet@gmail.com</a></b></mark></fit-text></div></mail-line>
<mail-line class="t" style="--gap:3px"><div class="li"><fit-text w="581">Please send a soft copy of the RESEARCH PAPER in word format only.</fit-text></div></mail-line>
<mail-line class="t" style="--gap:26px"><fit-text w="563" style="margin-left:30px"><mark>NOTE: - Send Abstract and Full paper separately in word format only.</mark></fit-text></mail-line>
<mail-line style="--gap:27px"><fit-text w="637">We reserve the right to reject your paper if the registration is not done within the above said number of days.</fit-text></mail-line>
<mail-line style="--gap:22px;font-size:22.500px"><fit-text w="245"><b><mark style="background:#f1c232">Paper id: </mark>ICCET220539</b></fit-text></mail-line>
<mail-line style="--gap:29px"><fit-text w="74">ICCET 2022</fit-text></mail-line>
<mail-line style="--gap:2px"><fit-text w="74"><a>www.iccet.in</a></fit-text></mail-line>
<mail-line style="--gap:2px"><fit-text w="75">9600034378</fit-text></mail-line>
<div class="rule" style="margin-top:18px"></div>
<div class="att"><fit-text w="119">2 Attachments</fit-text><ui-icon name="download" size="22" style="margin-left:1277px"></ui-icon><ui-icon name="driveadd" size="24" style="margin-left:28px"></ui-icon></div>
<div class="thumbs"><div class="card sheet"><span></span><span></span><span></span><span></span><span></span><span></span><span></span><span></span><span></span><span></span></div><div class="card"></div></div>
</div>`);
define('task-app',`<style>
:host{display:flex;align-items:center;justify-content:center;position:relative;box-sizing:border-box;width:50px;height:50px;border-radius:5px;flex:none}
:host([active]){background:rgba(255,255,255,.09);border:1px solid rgba(255,255,255,.06)}
.r{position:absolute;bottom:1px;width:8px;height:4px;border-radius:2px;background:#9a9ab4;display:none}
:host([run]) .r{display:block}:host([active]) .r{width:20px;background:#4cc2ff;bottom:0}
.b{position:absolute;left:27px;top:4px;width:20px;height:20px;border-radius:50%;font:bold 12px/20px Roboto,sans-serif;text-align:center;color:#cfe0e6;background:var(--b)}
.b:empty{display:none}
</style><span class="i"></span><span class="b"></span><span class="r"></span>`,(el,r)=>{
  const i=document.createElement('ui-icon');i.setAttribute('name',el.getAttribute('icon'));i.setAttribute('size',el.getAttribute('size')||'29');
  r.querySelector('.i').append(i);r.querySelector('.b').textContent=el.getAttribute('badge')||'';
});
define('task-bar',`<style>
:host{display:flex;align-items:center;flex:none;height:60px;color:#fff;font:15px "Open Sans",sans-serif;background:linear-gradient(90deg,#1d242d 0,#1b222c 310px,#11244f 365px,#10215a 520px,#131b64 650px,#10224f 760px,#121f5c 830px,#121c5e 930px,#191c4a 1000px,#1c1f3c 1080px,#1b1f40 1150px,#10225a 1240px,#11245a 1330px,#1a212f 1460px,#1d222c 1920px)}
.apps{display:flex;gap:5.100px;margin-left:687px;align-items:center}
.two{display:flex;flex-direction:column;line-height:20px;margin-top:-1px}
</style>
<div class="apps"><task-app icon="win"></task-app><task-app icon="tsearch"></task-app><task-app icon="tview"></task-app><task-app icon="pred"></task-app><task-app icon="folder" run></task-app><task-app icon="edge"></task-app><task-app icon="store"></task-app><task-app icon="chrome" size="28" run badge="S" style="--b:#0b4a42"></task-app><task-app icon="chrome" size="28" run active badge="S" style="--b:#0f5497"></task-app><task-app icon="wa" run></task-app></div>
<ui-icon name="wup" size="17" style="margin-left:329px"></ui-icon>
<ui-icon name="mic" size="21" style="margin-left:16px"></ui-icon>
<div class="two" style="margin-left:23px;align-items:center"><fit-text w="29">ENG</fit-text><fit-text w="15">IN</fit-text></div>
<ui-icon name="wifi" size="22" style="margin-left:22px"></ui-icon>
<ui-icon name="vol" size="20" style="margin-left:9px"></ui-icon>
<ui-icon name="batt" size="21" style="margin-left:9px"></ui-icon>
<div class="two" style="margin-left:19px;align-items:flex-end"><fit-text w="36">20:50</fit-text><fit-text w="76">01-05-2022</fit-text></div>
<ui-icon name="moon" size="19" style="margin-left:12px"></ui-icon>`);
define('desk-screen',`<style>
:host{display:flex;flex-direction:column;background:#111;position:relative;overflow:hidden}
.main{display:flex;height:851px;flex:none}
.right{width:1600px}
.view{display:flex;justify-content:space-between}
.scroll{width:14px;height:791px;background:#1c1c1c}.scroll::before{content:"";display:block;height:417px;background:#707070}
.tab{position:absolute;left:1890px;top:962px;width:50px;height:50px;border-radius:50%;background:#5c5c5c;color:#fff;box-shadow:0 1px 4px rgba(0,0,0,.5);clip-path:inset(-6px -6px -6px -6px)}
.tab ui-icon{margin:17px 0 0 9px}
</style><browser-chrome></browser-chrome><gmail-header></gmail-header>
<div class="main"><side-bar></side-bar><div class="right"><mail-toolbar></mail-toolbar><div class="view"><mail-message></mail-message><div class="scroll"></div></div></div></div>
<task-bar></task-bar><div class="tab"><ui-icon name="left" size="16"></ui-icon></div>`);
/* measure every fitted line, then set its tracking */
const plan=fits.map(e=>{const w=+e.getAttribute('w'),n=e.textContent.length;return [e,(w-e.getBoundingClientRect().width)/n];});
plan.forEach(([e,s])=>{e.style.letterSpacing=s.toFixed(3)+'px';});
</script>
</body>
</html>
